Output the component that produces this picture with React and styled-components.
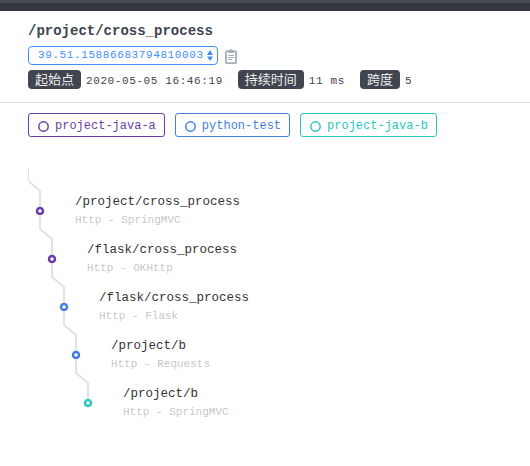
import React from "react";
import styled, { createGlobalStyle } from "styled-components";

const GlobalStyle = createGlobalStyle`
  * { box-sizing: border-box; }
  body {
    margin: 0;
    background: #fff;
    color: #3d444f;
    font-family: "Courier New", "Liberation Mono", "Noto Sans CJK SC", monospace;
    font-size: 12px;
  }
`;

const Page = styled.div`
  height: 466px;
  overflow: hidden;
`;

const TopBar = styled.div`
  height: 11px;
  background: #333740;
  border-top: 3px solid #484b55;
`;

const Header = styled.header`
  height: 92px;
  padding: 12px 28px 0;
  border-bottom: 1px solid #e2e2e2;
`;

const Title = styled.h1`
  margin: 0;
  height: 17px;
  font-size: 14px;
  line-height: 17px;
  font-weight: 700;
`;

const TraceRow = styled.div`
  display: flex;
  align-items: center;
  gap: 7px;
  margin-top: 6px;
  height: 19px;
`;

const TraceSelect = styled.div`
  display: flex;
  align-items: center;
  justify-content: space-between;
  width: 190px;
  height: 19px;
  padding: 0 4px 0 9px;
  border: 1px solid #448dfe;
  border-radius: 4px;
  color: #448dfe;
  font-size: 11px;
  line-height: 17px;
  letter-spacing: 0.6px;
  white-space: nowrap;
`;

const Arrows = styled.svg`
  flex: none;
  width: 6px;
  height: 11px;
`;

const Clipboard = styled.svg`
  width: 12px;
  height: 15px;
  margin-top: 2px;
`;

const Stats = styled.div`
  display: flex;
  margin-top: 5px;
`;

const Stat = styled.div`
  display: flex;
  align-items: center;
  height: 19px;
  margin-right: 15px;
  font-size: 11px;
  letter-spacing: 0.6px;
  white-space: pre;
`;

const StatLabel = styled.span`
  height: 19px;
  margin-right: 5px;
  padding: 0 7px;
  border-radius: 4px;
  background: #40454f;
  color: #eee;
  font: 13px/18px "Noto Sans CJK SC", sans-serif;
  letter-spacing: 0;
`;

const StatValue = styled.span`
  padding-top: 2px;
`;

const Services = styled.div`
  display: flex;
  gap: 10px;
  padding: 10px 28px 0;
`;

const Service = styled.div`
  display: flex;
  align-items: center;
  gap: 6px;
  height: 24px;
  padding: 0 8px 0 9px;
  border: 1px solid ${(p) => p.$color};
  border-radius: 3px;
  color: ${(p) => p.$color};
  line-height: 22px;
  white-space: nowrap;
`;

const Ring = styled.svg`
  width: 11px;
  height: 11px;
  margin-top: 3px;
`;

const ServiceName = styled.span`
  padding-top: 1px;
`;

const Tree = styled.div`
  padding: 26px 0 0 28px;
`;

const Span = styled.div`
  display: flex;
  height: 48px;
  padding-left: ${(p) => p.$depth * 12}px;
`;

const Connector = styled.svg`
  flex: none;
  width: 20px;
  height: 48px;
  overflow: visible;
`;

const SpanText = styled.div`
  padding: 32px 0 0 27px;
  white-space: nowrap;
`;

const SpanName = styled.div`
  height: 18px;
  color: #333;
  font-size: 12.5px;
  line-height: 15px;
`;

const SpanMeta = styled.div`
  color: #c8c8c8;
  font-size: 11px;
  line-height: 15px;
`;

const services = [
  { name: "project-java-a", color: "#6a3da8" },
  { name: "python-test", color: "#437fdf" },
  { name: "project-java-b", color: "#2ac8c1" },
];

const stats = [
  ["起始点", "2020-05-05 16:46:19"],
  ["持续时间", "11 ms"],
  ["跨度", "5"],
];

const spans = [
  { name: "/project/cross_process", meta: "Http - SpringMVC", color: "#6a3da8" },
  { name: "/flask/cross_process", meta: "Http - OKHttp", color: "#6a3da8" },
  { name: "/flask/cross_process", meta: "Http - Flask", color: "#437fdf" },
  { name: "/project/b", meta: "Http - Requests", color: "#437fdf" },
  { name: "/project/b", meta: "Http - SpringMVC", color: "#2ac8c1" },
];

export default function App() {
  return (
    <Page>
      <GlobalStyle />
      <TopBar />
      <Header>
        <Title>/project/cross_process</Title>
        <TraceRow>
          <TraceSelect>
            39.51.15886683794810003
            <Arrows viewBox="0 0 6 11" fill="currentColor">
              <path d="M3 0 6 5H0zM0 6.5h6l-3 4.5z" />
            </Arrows>
          </TraceSelect>
          <Clipboard viewBox="0 0 12 15" fill="none" stroke="#a7aebb">
            <rect x=".9" y="2.2" width="10.2" height="12" rx="1.2" strokeWidth="1.8" />
            <path d="M3 1.5h1.5a1.5 1.5 0 0 1 3 0H9V4H3z" fill="#a7aebb" stroke="none" />
            <path d="M3 6.5h6M3 8.5h6M3 10.5h4" />
          </Clipboard>
        </TraceRow>
        <Stats>
          {stats.map(([label, value]) => (
            <Stat key={label}>
              <StatLabel>{label}</StatLabel>
              <StatValue>{value}</StatValue>
            </Stat>
          ))}
        </Stats>
      </Header>
      <Services>
        {services.map((s) => (
          <Service key={s.name} $color={s.color}>
            <Ring viewBox="0 0 11 11">
              <circle cx="5.5" cy="5.5" r="4.7" fill="none" stroke="currentColor" strokeWidth="1.5" />
            </Ring>
            <ServiceName>{s.name}</ServiceName>
          </Service>
        ))}
      </Services>
      <Tree>
        {spans.map((s, i) => (
          <Span key={i} $depth={i}>
            <Connector viewBox="0 0 20 48" fill="none">
              {i === 0 ? (
                <>
                  <path d="M.5 5v13" stroke="#e2e2e2" />
                  <path d="M.5 18 12 28v20" stroke="#e2e2e2" strokeWidth="2" />
                </>
              ) : (
                <path d="M0 4v14l12 10v20" stroke="#e2e2e2" strokeWidth="2" />
              )}
              <circle cx="12" cy="48" r="3" fill="#fff" stroke={s.color} strokeWidth="2.5" />
            </Connector>
            <SpanText>
              <SpanName>{s.name}</SpanName>
              <SpanMeta>{s.meta}</SpanMeta>
            </SpanText>
          </Span>
        ))}
      </Tree>
    </Page>
  );
}
